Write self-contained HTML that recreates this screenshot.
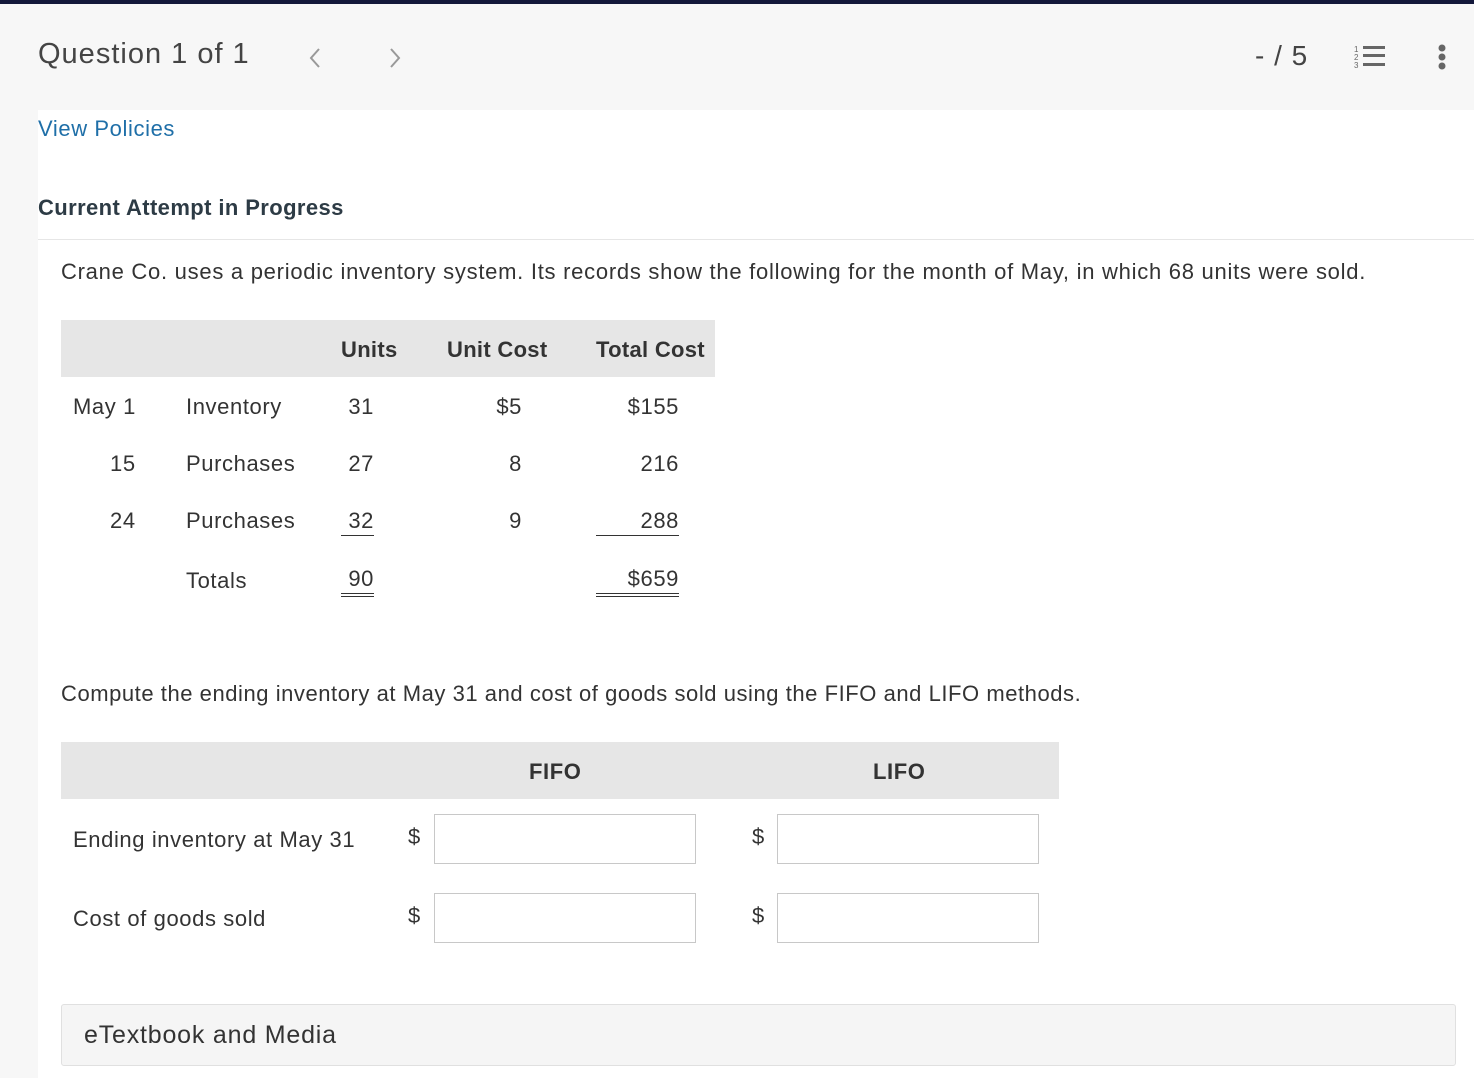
<!DOCTYPE html>
<html><head><meta charset="utf-8"><style>
*{margin:0;padding:0;box-sizing:border-box}
body{width:1474px;height:1078px;overflow:hidden;background:#f7f7f7;font-family:"Liberation Sans",sans-serif;color:#333;position:relative}
.a{position:absolute;white-space:nowrap}
.top{position:absolute;left:0;top:0;width:1474px;height:4px;background:#13183a}
.main{position:absolute;left:38px;top:110px;width:1436px;height:968px;background:#fff}
.t{font-size:22px;letter-spacing:0.6px}
.r{text-align:right;width:100px}
.inp{position:absolute;width:262px;height:50px;border:1px solid #c8c8c8;background:#fff}
.ul{position:absolute;height:1px;background:#333}
</style></head><body>
<div class="top"></div>
<div class="a" style="left:38px;top:38px;font-size:29px;color:#444;letter-spacing:1px">Question 1 of 1</div>
<svg class="a" style="left:308px;top:47px" width="14" height="22"><path d="M11 2 L3 11 L11 20" fill="none" stroke="#999" stroke-width="2"/></svg>
<svg class="a" style="left:388px;top:47px" width="14" height="22"><path d="M3 2 L11 11 L3 20" fill="none" stroke="#999" stroke-width="2"/></svg>
<div class="a" style="left:1255px;top:40px;font-size:28px;color:#444;letter-spacing:1px">- / 5</div>
<svg class="a" style="left:1352px;top:44px" width="34" height="26"><g fill="#666"><rect x="11" y="2" width="22" height="3"/><rect x="11" y="10" width="22" height="3"/><rect x="11" y="19" width="22" height="3"/></g><text x="2" y="8" font-size="8" fill="#666" font-family="Liberation Sans">1</text><text x="2" y="16" font-size="8" fill="#666" font-family="Liberation Sans">2</text><text x="2" y="24" font-size="8" fill="#666" font-family="Liberation Sans">3</text></svg>
<svg class="a" style="left:1436px;top:44px" width="12" height="28"><g fill="#666"><circle cx="6" cy="4" r="3.5"/><circle cx="6" cy="13" r="3.5"/><circle cx="6" cy="22" r="3.5"/></g></svg>
<div class="main"></div>
<div class="a t" style="left:38px;top:116px;color:#1f6fa8">View Policies</div>
<div class="a" style="left:38px;top:195px;font-size:22px;font-weight:bold;color:#2d3b45;letter-spacing:0.4px">Current Attempt in Progress</div>
<div class="a" style="left:38px;top:239px;width:1436px;height:1px;background:#e6e6e6"></div>
<div class="a t" style="left:61px;top:259px;letter-spacing:0.73px">Crane Co. uses a periodic inventory system. Its records show the following for the month of May, in which 68 units were sold.</div>
<div class="a" style="left:61px;top:320px;width:654px;height:57px;background:#e6e6e6"></div>
<div class="a t" style="left:341px;top:337px;font-weight:bold;letter-spacing:0.3px">Units</div>
<div class="a t" style="left:447px;top:337px;font-weight:bold;letter-spacing:0.3px">Unit Cost</div>
<div class="a t" style="left:596px;top:337px;font-weight:bold;letter-spacing:0.3px">Total Cost</div>
<div class="a t" style="left:73px;top:394px">May 1</div>
<div class="a t" style="left:186px;top:394px">Inventory</div>
<div class="a t r" style="left:274px;top:394px">31</div>
<div class="a t r" style="left:422px;top:394px">$5</div>
<div class="a t r" style="left:579px;top:394px">$155</div>
<div class="a t" style="left:110px;top:451px">15</div>
<div class="a t" style="left:186px;top:451px">Purchases</div>
<div class="a t r" style="left:274px;top:451px">27</div>
<div class="a t r" style="left:422px;top:451px">8</div>
<div class="a t r" style="left:579px;top:451px">216</div>
<div class="a t" style="left:110px;top:508px">24</div>
<div class="a t" style="left:186px;top:508px">Purchases</div>
<div class="a t r" style="left:274px;top:508px">32</div>
<div class="a t r" style="left:422px;top:508px">9</div>
<div class="a t r" style="left:579px;top:508px">288</div>
<div class="ul" style="left:341px;top:535px;width:33px"></div>
<div class="ul" style="left:596px;top:535px;width:83px"></div>
<div class="a t" style="left:186px;top:568px">Totals</div>
<div class="a t r" style="left:274px;top:566px">90</div>
<div class="a t r" style="left:579px;top:566px">$659</div>
<div class="ul" style="left:341px;top:593px;width:33px"></div>
<div class="ul" style="left:341px;top:596px;width:33px"></div>
<div class="ul" style="left:596px;top:593px;width:83px"></div>
<div class="ul" style="left:596px;top:596px;width:83px"></div>
<div class="a t" style="left:61px;top:681px;letter-spacing:0.55px">Compute the ending inventory at May 31 and cost of goods sold using the FIFO and LIFO methods.</div>
<div class="a" style="left:61px;top:742px;width:998px;height:57px;background:#e6e6e6"></div>
<div class="a t" style="left:529px;top:759px;font-weight:bold">FIFO</div>
<div class="a t" style="left:873px;top:759px;font-weight:bold">LIFO</div>
<div class="a t" style="left:73px;top:827px">Ending inventory at May 31</div>
<div class="a t" style="left:408px;top:824px">$</div>
<div class="inp" style="left:434px;top:814px"></div>
<div class="a t" style="left:752px;top:824px">$</div>
<div class="inp" style="left:777px;top:814px"></div>
<div class="a t" style="left:73px;top:906px">Cost of goods sold</div>
<div class="a t" style="left:408px;top:903px">$</div>
<div class="inp" style="left:434px;top:893px"></div>
<div class="a t" style="left:752px;top:903px">$</div>
<div class="inp" style="left:777px;top:893px"></div>
<div class="a" style="left:61px;top:1004px;width:1395px;height:62px;background:#f5f5f5;border:1px solid #e0e0e0;border-radius:3px"></div>
<div class="a" style="left:84px;top:1021px;font-size:25px;letter-spacing:0.8px">eTextbook and Media</div>
</body></html>
